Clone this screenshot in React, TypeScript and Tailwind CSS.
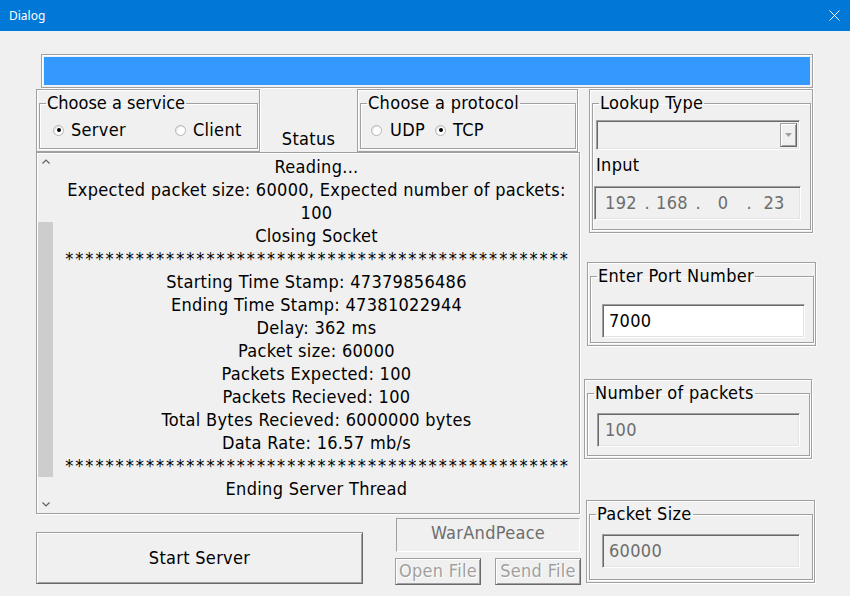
import React from "react";

const etched =
  "border border-[#a0a0a0] shadow-[inset_1px_1px_0_#fff,1px_1px_0_#fff]";
const sunken =
  "border border-t-[#a0a0a0] border-l-[#a0a0a0] border-b-white border-r-white";
const clientEdge =
  "border border-t-[#a0a0a0] border-l-[#a0a0a0] border-b-white border-r-white shadow-[inset_1px_1px_0_#696969,inset_-1px_-1px_0_#e3e3e3]";
const raised =
  "border border-t-[#a0a0a0] border-l-[#a0a0a0] border-b-[#696969] border-r-[#696969] shadow-[inset_1px_1px_0_#fff,inset_-1px_-1px_0_#a0a0a0]";

function Group({
  title,
  className,
  legendClass = "",
  children,
}: {
  title: string;
  className: string;
  legendClass?: string;
  children?: React.ReactNode;
}) {
  return (
    <div className={`${etched} pt-[3px] pl-[2px] pr-[1px] pb-[2px] flex ${className}`}>
      <fieldset className={`${etched} flex-1 min-w-0`}>
        <legend className={`ml-[6px] px-[1px] leading-[20px] ${legendClass}`}>{title}</legend>
        {children}
      </fieldset>
    </div>
  );
}

function Radio({ checked }: { checked?: boolean }) {
  return (
    <span className="w-[11px] h-[11px] rounded-full border border-[#b4b4b4] bg-white flex items-center justify-center shadow-[inset_1px_1px_0_#e6e6e6] shrink-0">
      {checked && <span className="w-[4px] h-[4px] rounded-full bg-black" />}
    </span>
  );
}

function Chevron({ up }: { up?: boolean }) {
  return (
    <svg width="8" height="5" viewBox="0 0 8 5">
      <polyline
        points={up ? "0.5,4.5 4,1 7.5,4.5" : "0.5,0.5 4,4 7.5,0.5"}
        fill="none"
        stroke="#606060"
        strokeWidth="1.2"
      />
    </svg>
  );
}

const stars = "*".repeat(50);

const logLines: { t: string; star?: boolean }[] = [
  { t: "Reading..." },
  { t: "Expected packet size: 60000, Expected number of packets:" },
  { t: "100" },
  { t: "Closing Socket" },
  { t: stars, star: true },
  { t: "Starting Time Stamp: 47379856486" },
  { t: "Ending Time Stamp: 47381022944" },
  { t: "Delay: 362 ms" },
  { t: "Packet size: 60000" },
  { t: "Packets Expected: 100" },
  { t: "Packets Recieved: 100" },
  { t: "Total Bytes Recieved: 6000000 bytes" },
  { t: "Data Rate: 16.57 mb/s" },
  { t: stars, star: true },
  { t: "Ending Server Thread" },
];

export default function App() {
  return (
    <div className="w-[850px] h-[596px] bg-[#f0f0f0] flex flex-col overflow-hidden text-black font-['DejaVu_Sans_Condensed','Liberation_Sans',sans-serif] text-[18px] leading-[20px] tracking-[0.3px]">
      {/* title bar */}
      <div className="h-[31px] shrink-0 bg-[#0078d7] flex items-center justify-between pl-[9px] pr-[10px]">
        <span className="text-white text-[12px] leading-[16px] tracking-normal font-['Noto_Sans',sans-serif]">
          Dialog
        </span>
        <svg width="11" height="11" viewBox="0 0 11 11">
          <path d="M0.5 0.5 L10.5 10.5 M10.5 0.5 L0.5 10.5" stroke="white" strokeWidth="1" />
        </svg>
      </div>

      <div className="flex-1 flex flex-col">
        {/* progress bar */}
        <div className={`${etched} mt-[23px] ml-[41px] w-[772px] h-[34px] p-[2px]`}>
          <div className="w-full h-full bg-[#3399ff]" />
        </div>

        <div className="flex mt-[1px]">
          {/* left column */}
          <div className="ml-[36px] w-[545px] flex flex-col">
            <div className="flex h-[63px]">
              <Group
                title="Choose a service"
                className="w-[224px] h-[63px]"
                legendClass="tracking-normal"
              >
                <div className="flex items-center mt-[7px] h-[20px]">
                  <span className="ml-[13px]">
                    <Radio checked />
                  </span>
                  <span className="ml-[7px]">Server</span>
                  <span className="ml-[49px]">
                    <Radio />
                  </span>
                  <span className="ml-[7px]">Client</span>
                </div>
              </Group>
              <div className="w-[97px] pt-[40px] text-center">Status</div>
              <Group title="Choose a protocol" className="w-[221px] h-[63px]">
                <div className="flex items-center mt-[7px] h-[20px]">
                  <span className="ml-[10px]">
                    <Radio />
                  </span>
                  <span className="ml-[8px]">UDP</span>
                  <span className="ml-[10px]">
                    <Radio checked />
                  </span>
                  <span className="ml-[7px]">TCP</span>
                </div>
              </Group>
            </div>

            {/* log */}
            <div className={`${etched} w-[544px] h-[362px] flex`}>
              <div className="w-[17px] flex flex-col">
                <div className="h-[17px] flex items-center justify-center">
                  <Chevron up />
                </div>
                <div className="flex-1">
                  <div className="ml-[1px] mt-[52px] w-[15px] h-[255px] bg-[#cdcdcd]" />
                </div>
                <div className="h-[17px] flex items-center justify-center">
                  <Chevron />
                </div>
              </div>
              <div className="flex-1 pt-[2px] flex flex-col items-center leading-[23px]">
                {logLines.map((l, i) => (
                  <div key={i} className={l.star ? "tracking-[2px] pl-[2px]" : ""}>
                    {l.t}
                  </div>
                ))}
              </div>
            </div>

            {/* bottom row */}
            <div className="flex">
              <button
                className={`${raised} mt-[18px] w-[328px] h-[52px] bg-[#f0f0f0] flex items-center justify-center tracking-[0.3px]`}
              >
                Start Server
              </button>
              <div className="ml-[32px] w-[186px] flex flex-col">
                <div
                  className={`${sunken} mt-[4px] ml-[1px] w-[184px] h-[34px] pb-[5px] flex items-center justify-center text-[#6d6d6d]`}
                >
                  WarAndPeace
                </div>
                <div className="flex mt-[6px]">
                  <div
                    className={`${raised} w-[86px] h-[27px] pb-[2px] flex items-center justify-center text-[#a0a0a0] [text-shadow:1px_1px_0_#fff]`}
                  >
                    Open File
                  </div>
                  <div
                    className={`${raised} ml-[14px] w-[86px] h-[27px] pb-[2px] flex items-center justify-center text-[#a0a0a0] [text-shadow:1px_1px_0_#fff]`}
                  >
                    Send File
                  </div>
                </div>
              </div>
            </div>
          </div>

          {/* right column */}
          <div className="ml-[3px] w-[231px] flex flex-col">
            <Group title="Lookup Type" className="ml-[5px] w-[224px] h-[144px]">
              <div className={`${clientEdge} ml-[3px] mt-[7px] w-[204px] h-[30px] flex justify-end p-[2px]`}>
                <div
                  className={`${raised} w-[17px] h-full bg-[#f0f0f0] flex items-center justify-center`}
                >
                  <svg width="7" height="4" viewBox="0 0 7 4">
                    <polygon points="0,0 7,0 3.5,4" fill="#a0a0a0" />
                  </svg>
                </div>
              </div>
              <div className="ml-[3px] mt-[5px]">Input</div>
              <div
                className={`${clientEdge} ml-[1px] mt-[11px] w-[207px] h-[34px] flex items-center text-[#6d6d6d] pl-[4px]`}
              >
                <span className="w-[44px] text-center">192</span>
                <span className="w-[7px] text-right">.</span>
                <span className="w-[44px] text-center">168</span>
                <span className="w-[7px] text-right">.</span>
                <span className="w-[44px] text-center">0</span>
                <span className="w-[7px] text-right">.</span>
                <span className="w-[44px] text-center">23</span>
              </div>
            </Group>

            <Group title="Enter Port Number" className="mt-[29px] ml-[3px] w-[229px] h-[84px]">
              <div
                className={`${clientEdge} ml-[11px] mt-[18px] w-[203px] h-[34px] bg-white flex items-center pl-[6px]`}
              >
                7000
              </div>
            </Group>

            <Group title="Number of packets" className="mt-[33px] w-[228px] h-[80px]">
              <div
                className={`${clientEdge} ml-[9px] mt-[10px] w-[203px] h-[34px] flex items-center pl-[7px] text-[#6d6d6d]`}
              >
                100
              </div>
            </Group>

            <Group title="Packet Size" className="mt-[41px] ml-[2px] w-[229px] h-[83px]">
              <div
                className={`${clientEdge} ml-[12px] mt-[10px] w-[198px] h-[34px] flex items-center pl-[6px] text-[#6d6d6d]`}
              >
                60000
              </div>
            </Group>
          </div>
        </div>
      </div>
    </div>
  );
}
